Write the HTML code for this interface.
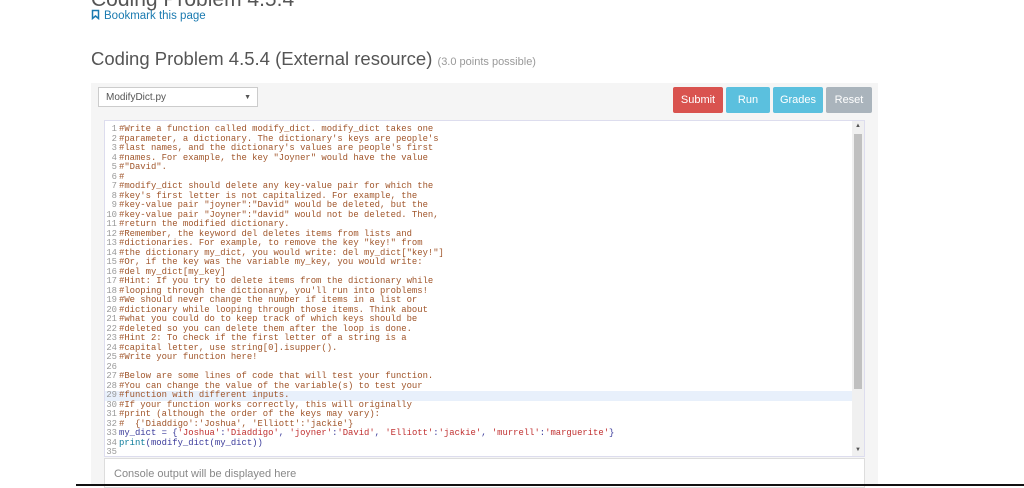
<!DOCTYPE html>
<html><head><meta charset="utf-8"><style>
body{margin:0;width:1024px;height:486px;overflow:hidden;background:#fff;font-family:"Liberation Sans",sans-serif;position:relative}
.abs{position:absolute}
.code{font-family:"Liberation Mono",monospace;font-size:8.9px;line-height:9.5px;white-space:pre;color:#a0552a}
.ln{color:#999;text-align:right;width:12px;display:inline-block;margin-right:2px}
.btn{position:absolute;top:87px;height:26px;color:#fff;font-size:11px;line-height:26px;text-align:center;border-radius:2px}
.k{color:#3a3a9a}.s{color:#c03030}.n{color:#0a7a9a}
</style></head><body>
<div class="abs" style="left:91px;top:-12px;font-size:21px;color:#555">Coding Problem 4.5.4</div>
<div class="abs" style="left:91px;top:9px;font-size:11.5px;color:#1a7ab0"><svg width="9" height="11" style="vertical-align:-1px;margin-right:4px"><path d="M1.5 1.5h6v8l-3-2.5-3 2.5z" fill="none" stroke="#1a7ab0" stroke-width="1.5"/></svg>Bookmark this page</div>
<div class="abs" style="left:91px;top:48px;font-size:18.5px;color:#555">Coding Problem 4.5.4 (External resource) <span style="font-size:11px;color:#999">(3.0 points possible)</span></div>
<div class="abs" style="left:91px;top:83px;width:787px;height:403px;background:#f5f5f5"></div>
<div class="abs" style="left:98px;top:87px;width:160px;height:20px;background:#fff;border:1px solid #ccc;font-size:10px;color:#555;line-height:20px;box-sizing:border-box;padding-left:7px">ModifyDict.py<span style="position:absolute;right:6px;font-size:7px">▼</span></div>
<div class="btn" style="left:673px;width:50px;background:#d9534f">Submit</div>
<div class="btn" style="left:726px;width:44px;background:#5bc0de">Run</div>
<div class="btn" style="left:773px;width:50px;background:#5bc0de">Grades</div>
<div class="btn" style="left:826px;width:46px;background:#aab4bc">Reset</div>
<div class="abs" style="left:104px;top:120px;width:761px;height:337px;background:#fff;border:1px solid #dde;box-sizing:border-box;overflow:hidden">
<div class="abs" style="left:0;top:270px;width:748px;height:9.5px;background:#e8f0fb"></div>
<div class="abs" style="right:0;top:0;width:12px;height:337px;background:#f0f0f0"></div>
<div class="abs" style="right:2px;top:13px;width:8px;height:255px;background:#c0c0c0"></div>
<div class="abs" style="right:3px;top:2px;font-size:6px;color:#555">▲</div>
<div class="abs" style="right:3px;top:326px;font-size:6px;color:#555">▼</div>
<div class="abs code" style="left:0;top:4px"><span class="ln">1</span>#Write a function called modify_dict. modify_dict takes one
<span class="ln">2</span>#parameter, a dictionary. The dictionary's keys are people's
<span class="ln">3</span>#last names, and the dictionary's values are people's first
<span class="ln">4</span>#names. For example, the key "Joyner" would have the value
<span class="ln">5</span>#"David".
<span class="ln">6</span>#
<span class="ln">7</span>#modify_dict should delete any key-value pair for which the
<span class="ln">8</span>#key's first letter is not capitalized. For example, the
<span class="ln">9</span>#key-value pair "joyner":"David" would be deleted, but the
<span class="ln">10</span>#key-value pair "Joyner":"david" would not be deleted. Then,
<span class="ln">11</span>#return the modified dictionary.
<span class="ln">12</span>#Remember, the keyword del deletes items from lists and
<span class="ln">13</span>#dictionaries. For example, to remove the key "key!" from
<span class="ln">14</span>#the dictionary my_dict, you would write: del my_dict["key!"]
<span class="ln">15</span>#Or, if the key was the variable my_key, you would write:
<span class="ln">16</span>#del my_dict[my_key]
<span class="ln">17</span>#Hint: If you try to delete items from the dictionary while
<span class="ln">18</span>#looping through the dictionary, you'll run into problems!
<span class="ln">19</span>#We should never change the number if items in a list or
<span class="ln">20</span>#dictionary while looping through those items. Think about
<span class="ln">21</span>#what you could do to keep track of which keys should be
<span class="ln">22</span>#deleted so you can delete them after the loop is done.
<span class="ln">23</span>#Hint 2: To check if the first letter of a string is a
<span class="ln">24</span>#capital letter, use string[0].isupper().
<span class="ln">25</span>#Write your function here!
<span class="ln">26</span>
<span class="ln">27</span>#Below are some lines of code that will test your function.
<span class="ln">28</span>#You can change the value of the variable(s) to test your
<span class="ln">29</span>#function with different inputs.
<span class="ln">30</span>#If your function works correctly, this will originally
<span class="ln">31</span>#print (although the order of the keys may vary):
<span class="ln">32</span>#  {'Diaddigo':'Joshua', 'Elliott':'jackie'}
<span class="ln">33</span><span class="k">my_dict = {</span><span class="s">'Joshua'</span><span class="k">:</span><span class="s">'Diaddigo'</span><span class="k">, </span><span class="s">'joyner'</span><span class="k">:</span><span class="s">'David'</span><span class="k">, </span><span class="s">'Elliott'</span><span class="k">:</span><span class="s">'jackie'</span><span class="k">, </span><span class="s">'murrell'</span><span class="k">:</span><span class="s">'marguerite'</span><span class="k">}</span>
<span class="ln">34</span><span class="n">print</span><span class="k">(modify_dict(my_dict))</span>
<span class="ln">35</span></div>
</div>
<div class="abs" style="left:104px;top:458px;width:761px;height:30px;background:#fff;border:1px solid #ddd;box-sizing:border-box;font-size:11px;color:#888;padding:9px 0 0 9px">Console output will be displayed here</div>
<div class="abs" style="left:76px;top:484px;width:948px;height:2px;background:#111"></div>
</body></html>
